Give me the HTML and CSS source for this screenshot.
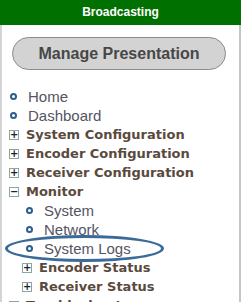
FILE: index.html
```html
<!DOCTYPE html>
<html lang="en">
<head>
  <meta charset="UTF-8" />
  <title>Broadcasting Menu</title>
  <link rel="stylesheet" href="styles.css">
</head>
<body>
  <div class="sidebar">
    <header class="side-head">Broadcasting</header>
    <div class="side-body">
      <button class="manage-btn">Manage Presentation</button>
      <ul class="menu">
        <li class="leaf"><span class="dot"></span>Home</li>
        <li class="leaf"><span class="dot"></span>Dashboard</li>
        <li class="group"><span class="box">+</span>System Configuration</li>
        <li class="group"><span class="box">+</span>Encoder Configuration</li>
        <li class="group"><span class="box">+</span>Receiver Configuration</li>
        <li class="group"><span class="box">&minus;</span>Monitor</li>
        <li class="leaf sub"><span class="dot"></span>System</li>
        <li class="leaf sub"><span class="dot"></span>Network</li>
        <li class="leaf sub marked"><span class="dot"></span>System Logs<span class="ring"></span></li>
        <li class="group sub"><span class="box">+</span>Encoder Status</li>
        <li class="group sub"><span class="box">+</span>Receiver Status</li>
        <li class="group"><span class="box">+</span>Troubleshoot</li>
      </ul>
    </div>
  </div>
</body>
</html>
```
FILE: styles.css
```css
* {
  box-sizing: border-box;
}
body {
  margin: 0;
  background: #fff;
  font-family: "Liberation Sans", Arial, sans-serif;
}
.sidebar {
  width: 241px;
  height: 302px;
  overflow: hidden;
}
.side-head {
  background: #007000;
  color: #fff;
  font-weight: bold;
  font-size: 12px;
  height: 25px;
  line-height: 25px;
  text-align: center;
}
.side-body {
  border-left: 2px solid #d4d4d4;
  border-right: 2px solid #c4c4c4;
  height: 277px;
  padding: 12px 0 0 0;
}
.manage-btn {
  display: block;
  margin: 0 0 0 10px;
  width: 214px;
  height: 33px;
  border: 1px solid #8a8a8a;
  border-radius: 17px;
  background: #d3d3d3;
  color: #474747;
  font-family: "Liberation Sans", Arial, sans-serif;
  font-weight: bold;
  font-size: 16px;
  padding: 0;
}
.menu {
  list-style: none;
  margin: 17px 0 0 0;
  padding: 0;
}
.menu li {
  position: relative;
  display: flex;
  align-items: center;
  height: 19px;
  white-space: nowrap;
}
.leaf {
  padding-left: 8px;
  color: #545463;
  font-size: 15px;
}
.group {
  padding-left: 7px;
  color: #5a4a3e;
  font-family: "DejaVu Sans", Verdana, sans-serif;
  font-weight: bold;
  font-size: 13px;
}
.leaf.sub {
  padding-left: 24px;
}
.group.sub {
  padding-left: 20px;
}
.dot {
  width: 7px;
  height: 7px;
  border: 2px solid #2d5d8c;
  border-radius: 50%;
  margin-right: 11px;
}
.box {
  width: 10px;
  height: 10px;
  border: 1px solid #8aa5a8;
  color: #222;
  font-family: "DejaVu Sans", sans-serif;
  font-size: 10px;
  font-weight: bold;
  line-height: 8px;
  text-align: center;
  margin-right: 7px;
}
.ring {
  position: absolute;
  left: 3px;
  top: -4px;
  width: 159px;
  height: 27px;
  border: 3px solid #3a6a9a;
  border-radius: 50%;
}
```
